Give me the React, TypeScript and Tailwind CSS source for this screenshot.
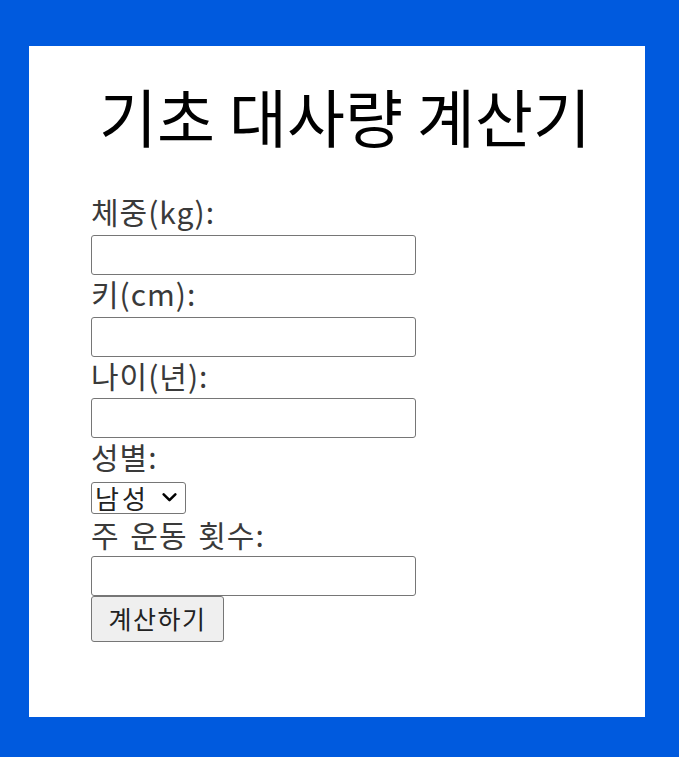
const fieldClass =
  "block w-[325px] h-[40px] border border-[#767676] rounded-[3px] bg-white px-2 text-[20px] text-black outline-none";

const labelText = "text-[30px] tracking-[1px] [word-spacing:3px] text-[#3a3a3a] whitespace-nowrap";

function Field({ label, h = "h-[42px]" }: { label: string; h?: string }) {
  return (
    <>
      <label className={`block ${h} leading-[37px] ${labelText}`}>{label}</label>
      <input type="text" className={fieldClass} />
    </>
  );
}

export default function App() {
  return (
    <div className="min-h-[757px] bg-[#005ade] pt-[46px] pl-[29px] pr-[34px] pb-[40px] font-['Noto_Sans_CJK_KR','Noto_Sans',sans-serif]">
      <div className="h-[671px] bg-white pt-[36px] pl-[62px] pr-[46px]">
        <h1 className="text-center text-[63px] leading-[66px] font-normal text-black whitespace-nowrap">
          기초 대사량 계산기
        </h1>

        <form className="mt-[45px]" onSubmit={(e) => e.preventDefault()}>
          <Field label="체중(kg):" />
          <Field label="키(cm):" />
          <Field label="나이(년):" h="h-[41px]" />

          <label className={`block h-[44px] leading-[37px] ${labelText}`}>성별:</label>
          <div className="h-[34px]">
            <div className="relative inline-block">
              <select className="appearance-none w-[95px] h-[32px] border border-[#767676] rounded-[3px] bg-white pl-[3px] pr-6 text-[26px] tracking-[3px] leading-[28px] text-[#222] outline-none">
                <option>남성</option>
                <option>여성</option>
              </select>
              <svg
                viewBox="0 0 16 10"
                className="pointer-events-none absolute right-[9px] top-[11px] w-[15px] h-[9px]"
                fill="none"
                stroke="black"
                strokeWidth={2.8}
                strokeLinecap="round"
                strokeLinejoin="round"
              >
                <polyline points="1.5,1.5 8,8 14.5,1.5" />
              </svg>
            </div>
          </div>

          <Field label="주 운동 횟수:" h="h-[40px]" />

          <button
            type="submit"
            className="h-[46px] w-[133px] border border-[#767676] rounded-[3px] bg-[#efefef] text-[25px] tracking-[1.5px] text-[#222]"
          >
            계산하기
          </button>
        </form>
      </div>
    </div>
  );
}
